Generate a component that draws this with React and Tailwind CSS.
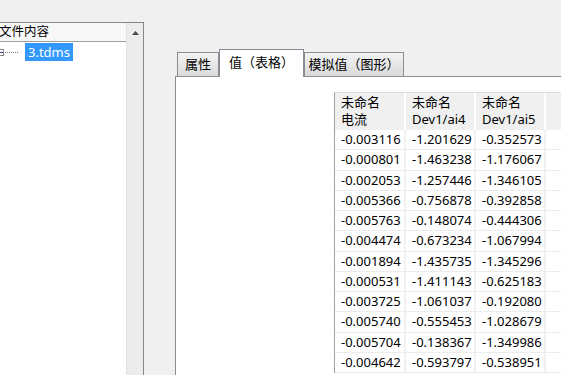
import React from 'react';

const FONT = { fontFamily: '"Noto Sans", "Noto Sans CJK SC", sans-serif' };

const ROWS = [
  ['-0.003116', '-1.201629', '-0.352573'],
  ['-0.000801', '-1.463238', '-1.176067'],
  ['-0.002053', '-1.257446', '-1.346105'],
  ['-0.005366', '-0.756878', '-0.392858'],
  ['-0.005763', '-0.148074', '-0.444306'],
  ['-0.004474', '-0.673234', '-1.067994'],
  ['-0.001894', '-1.435735', '-1.345296'],
  ['-0.000531', '-1.411143', '-0.625183'],
  ['-0.003725', '-1.061037', '-0.192080'],
  ['-0.005740', '-0.555453', '-1.028679'],
  ['-0.005704', '-0.138367', '-1.349986'],
  ['-0.004642', '-0.593797', '-0.538951'],
];

const HEAD = [
  ['未命名', '电流'],
  ['未命名', 'Dev1/ai4'],
  ['未命名', 'Dev1/ai5'],
];

const COLS = ['w-[71px]', 'w-[70px]', 'w-[70px]'];

function TreePanel() {
  return (
    <div className="w-[144px] shrink-0 pt-[22px] flex flex-col">
      <div className="flex-1 flex bg-white border-t border-r border-[#828790]">
        <div className="w-[126px] flex flex-col">
          <div className="h-[19px] border-b border-[#a0a0a0] bg-[#f7f7f7] flex items-center text-[12.5px] text-black -ml-[1px] leading-none">
            文件内容
          </div>
          <div className="flex items-center h-[18px] mt-[1px]">
            <div className="w-[4px] h-[7px] border border-l-0 border-[#8a8a8a] flex items-center">
              <div className="w-[3px] h-px bg-[#2a4a8a]" />
            </div>
            <div className="w-[13px] ml-[1px] border-t border-dotted border-[#777]" />
            <div className="ml-[7px] h-[18px] px-[3px] bg-[#3399ff] text-white text-[13px] flex items-center leading-none">
              3.tdms
            </div>
          </div>
        </div>
        <div className="w-[17px] bg-[#ececec] border-l border-[#e2e2e2] flex justify-center pt-[8px]">
          <svg width="7" height="4" viewBox="0 0 7 4">
            <path d="M3.5 0 L7 4 L0 4 Z" fill="#4a4a4a" />
          </svg>
        </div>
      </div>
    </div>
  );
}

function Tab({ label, selected, className }) {
  if (selected) {
    return (
      <div className={`h-[28px] -mb-px relative z-10 bg-white border border-b-0 border-[#898c95] flex items-start pt-[4px] justify-center text-[13px] text-black leading-[16px] ${className}`}>
        {label}
      </div>
    );
  }
  return (
    <div className={`h-[24px] bg-gradient-to-b from-[#f3f3f3] to-[#dadada] border border-b-0 border-[#898c95] flex items-center justify-center text-[13px] text-black leading-none ${className}`}>
      {label}
    </div>
  );
}

function Table() {
  return (
    <div className="border-l border-t border-l-[#a0a0a0] border-t-[#dcdcdc] text-[13px] text-black">
      <div className="flex bg-[#f0f0f0] h-[37px]">
        {HEAD.map((h, i) => (
          <div key={i} className={`${COLS[i]} border-r-2 border-white pl-[6px] pt-[1px] leading-[17px]`}>
            <div>{h[0]}</div>
            <div>{h[1]}</div>
          </div>
        ))}
        <div className="flex-1" />
      </div>
      {ROWS.map((r, ri) => (
        <div key={ri} className="flex h-[20.25px] border-b border-[#ececec]">
          {r.map((v, ci) => (
            <div key={ci} className={`${COLS[ci]} border-r-2 border-[#f0f0f0] pl-[6px] flex items-center leading-none`}>
              {v}
            </div>
          ))}
          <div className="flex-1" />
        </div>
      ))}
    </div>
  );
}

export default function App() {
  return (
    <div className="w-[561px] h-[375px] bg-[#f0f0f0] flex overflow-hidden" style={FONT}>
      <TreePanel />
      <div className="flex-1 ml-[31px] pt-[49px] flex flex-col">
        <div className="flex items-end h-[27px] pl-[2px]">
          <Tab label="属性" className="w-[42px]" />
          <Tab label="值（表格）" selected className="w-[85px]" />
          <Tab label="模拟值（图形）" className="w-[100px]" />
        </div>
        <div className="flex-1 bg-white border-l border-t border-[#898c95] pl-[158px] pt-[15px]">
          <Table />
        </div>
      </div>
    </div>
  );
}
